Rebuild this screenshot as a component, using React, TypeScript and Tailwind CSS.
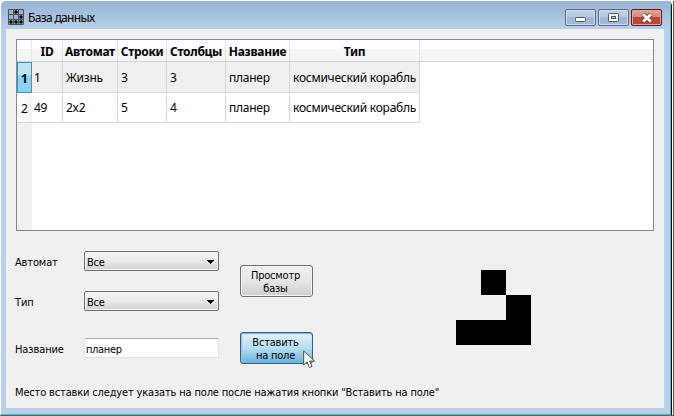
import type { ReactNode } from 'react';

const columns = [
  { title: 'ID', cls: 'w-[31px]' },
  { title: 'Автомат', cls: 'w-[55px]' },
  { title: 'Строки', cls: 'w-[49px]' },
  { title: 'Столбцы', cls: 'w-[59px]' },
  { title: 'Название', cls: 'w-[64px]' },
  { title: 'Тип', cls: 'w-[130px]' },
];

const rows = [
  ['1', 'Жизнь', '3', '3', 'планер', 'космический корабль'],
  ['49', '2x2', '5', '4', 'планер', 'космический корабль'],
];

const glider = [0, 1, 0, 0, 0, 1, 1, 1, 1];

function AppIcon() {
  return (
    <svg className="mt-2 ml-[7px] h-4 w-4 shrink-0" viewBox="0 0 16 16">
      <rect width="16" height="16" rx="1" fill="#4a525e" />
      <path d="M1 1h4v4H1zM6 1h4v4H6zM11 1h4v4h-4zM1 6h4v4H1zM6 6h4v4H6zM11 6h4v4h-4zM1 11h4v4H1zM6 11h4v4H6zM11 11h4v4h-4z" fill="#9fb3c9" />
      <g fill="#000">
        <circle cx="8" cy="3" r="1.7" />
        <circle cx="13" cy="8" r="1.7" />
        <circle cx="3" cy="13" r="1.7" />
        <circle cx="8" cy="13" r="1.7" />
        <circle cx="13" cy="13" r="1.7" />
      </g>
    </svg>
  );
}

function CaptionButton({ danger = false, children }: { danger?: boolean; children: ReactNode }) {
  return (
    <div
      className={
        'flex h-[17px] w-[31px] items-center justify-center rounded-[2px] border ' +
        (danger
          ? 'border-[#571c22] bg-linear-to-b from-[#e3a79a] from-0% via-[#d4877a] via-45% to-[#bd4630] to-50% shadow-[inset_0_0_0_1px_#e0a598]'
          : 'border-[#5a6c85] bg-linear-to-b from-[#bfd2e8] from-0% via-[#b3c8e0] via-45% to-[#a0b9d5] to-50% shadow-[inset_0_0_0_1px_#cbdbed]')
      }
    >
      {children}
    </div>
  );
}

function Combo({ value }: { value: string }) {
  return (
    <div className="flex h-5 w-[135px] items-center justify-between rounded-[2px] border border-[#707070] bg-linear-to-b from-[#f2f2f2] from-0% via-[#ebebeb] via-48% to-[#cfcfcf] pr-1 pl-[2px] shadow-[inset_0_0_0_1px_#f5f5f5]">
      <span className="pt-[2px] tracking-[-0.25px]">{value}</span>
      <svg className="mt-[2px] h-1 w-[7px]" viewBox="0 0 7 4" shapeRendering="crispEdges">
        <path d="M0 0h7L3.5 4z" fill="#000" />
      </svg>
    </div>
  );
}

export default function App() {
  return (
    <div className="flex h-[416px] w-[674px] flex-col border-b border-b-[#606060] bg-white pt-px pl-px font-['DejaVu_Sans_Condensed','DejaVu_Sans',sans-serif] text-[11px] leading-[13px] text-black [font-stretch:condensed]">
      <div className="flex min-h-0 flex-1 border-r border-[#5b615d]">
        <div className="mr-px flex flex-1 flex-col overflow-hidden rounded-t-[5px] border-r border-black">
          <div className="flex flex-1 flex-col rounded-tr-[4px] border-r border-b border-r-[#38c9e8] border-b-[#38bdd1] bg-[#bad0ea] pr-[6px] pb-[6px] pl-[5px]">
            <header className="-mr-[6px] -ml-[5px] flex h-7 shrink-0 bg-linear-to-b from-[#98b4d1] to-[#b8cfe9]">
              <AppIcon />
              <span className="mt-[9px] ml-1 font-['Noto_Sans',sans-serif] text-[12px] leading-4 tracking-[-0.65px]">База данных</span>
              <div className="mt-2 mr-2 ml-auto flex gap-[2px]">
                <CaptionButton>
                  <svg className="mt-[4px] h-[5px] w-[11px]" viewBox="0 0 11 5"><rect x=".5" y=".5" width="10" height="4" rx="1" fill="#fff" stroke="#535666" /></svg>
                </CaptionButton>
                <CaptionButton>
                  <svg className="h-[9px] w-[11px]" viewBox="0 0 11 9"><rect x=".5" y=".5" width="10" height="8" rx="1" fill="#fff" stroke="#535666" /><rect x="3.5" y="3.5" width="4" height="2" fill="#aabfd8" stroke="#535666" /></svg>
                </CaptionButton>
                <CaptionButton danger>
                  <svg className="h-[10px] w-3" viewBox="0 0 12 10"><path d="M2 1.3 10 8.7M10 1.3 2 8.7" stroke="#53505c" strokeWidth="4.6" /><path d="M2.2 1.4 9.8 8.6M9.8 1.4 2.2 8.6" stroke="#fff" strokeWidth="2.8" /></svg>
                </CaptionButton>
              </div>
            </header>

            <main className="flex flex-1 flex-col bg-[#f0f0f0] pt-[10px] pl-[10px]">
              <div className="flex h-[192px] w-[638px] shrink-0 flex-col border border-[#828790] bg-white font-['Noto_Sans',sans-serif] text-[12px] leading-4">
                <div className="flex h-[22px] shrink-0 border-b border-[#d5d5d5] bg-linear-to-b from-white from-45% to-[#f3f5f7] to-45% font-bold">
                  <div className="w-[15px] border-r border-[#e4e6e9]" />
                  {columns.map((c) => (
                    <div key={c.title} className={'flex items-center justify-center border-r border-[#dfe2e5] pt-[3px] whitespace-nowrap tracking-[-0.3px] ' + c.cls}>
                      {c.title}
                    </div>
                  ))}
                </div>
                <div className="flex flex-1">
                  <div className="flex w-[15px] flex-col bg-[#f0f0f0]">
                    <div className="flex h-[31px] items-center justify-center border border-[#4590b5] bg-linear-to-b from-[#bde4f5] from-40% to-[#8dd0f2] to-45% pt-[3px] font-bold">1</div>
                    <div className="flex h-[30px] items-center justify-center border-b border-[#d5d5d5] bg-linear-to-r from-white to-[#f3f5f7] pt-[3px]">2</div>
                  </div>
                  <div>
                    {rows.map((row, r) => (
                      <div key={r} className={'flex border-b border-[#d8d8d8] ' + (r === 0 ? 'h-[31px] bg-[#f0f0f0]' : 'h-[30px]')}>
                        {row.map((cell, i) => (
                          <div
                            key={i}
                            className={
                              'flex items-center border-r border-[#d8d8d8] whitespace-nowrap tracking-[-0.25px] ' +
                              (r === 0 ? 'pt-[2px] ' : 'pt-px ') +
                              (i === 0 ? 'pl-[2px] ' : 'pl-[3px] ') +
                              columns[i].cls
                            }
                          >
                            {cell}
                          </div>
                        ))}
                      </div>
                    ))}
                  </div>
                </div>
              </div>

              <div className="flex h-[133px] shrink-0">
                <div className="flex w-[203px] flex-col pt-5">
                  <label className="flex items-center justify-between">
                    <span className="-ml-px pt-[2px] tracking-[-0.15px]">Автомат</span>
                    <Combo value="Все" />
                  </label>
                  <label className="mt-5 flex items-center justify-between">
                    <span className="-ml-px pt-[2px] tracking-[-0.15px]">Тип</span>
                    <Combo value="Все" />
                  </label>
                  <label className="mt-[27px] flex items-center justify-between">
                    <span className="-ml-px pt-[2px] tracking-[-0.1px]">Название</span>
                    <div className="flex h-5 w-[135px] items-center rounded-[2px] border border-[#e2e3ea] border-t-[#abadb3] bg-white pt-[2px] pl-[1px] tracking-[-0.35px]">планер</div>
                  </label>
                </div>
                <div className="ml-[21px] flex w-[73px] flex-col gap-[35px] pt-[34px] text-center tracking-[-0.2px]">
                  <button className="h-8 rounded-[3px] border border-[#707070] bg-linear-to-b from-[#f2f2f2] from-0% via-[#e6e6e6] via-48% to-[#cfcfcf] pt-px pr-[2px] shadow-[inset_0_0_0_1px_#f4f4f4]">
                    Просмотр<br />базы
                  </button>
                  <button className="relative h-8 rounded-[3px] border border-[#2c628b] bg-linear-to-b from-[#e3f3fc] from-0% via-[#b7def3] via-50% to-[#68b3db] pt-px pr-[2px] shadow-[inset_0_1px_1px_#7eabc4,inset_1px_0_1px_#9fc4d8]">
                    Вставить<br />на поле
                    <svg className="absolute top-[17px] left-[62px] h-[19px] w-[13px]" viewBox="0 0 13 19">
                      <path d="M.7 1v14l3.3-3.1 2.4 5.6 2.6-1.1-2.4-5.3h5z" fill="#fff" stroke="#4a4a4a" />
                    </svg>
                  </button>
                </div>
                <div className="mt-[39px] ml-[143px] grid h-[75px] w-[75px] grid-cols-3 grid-rows-3">
                  {glider.map((on, i) => (
                    <div key={i} className={on ? 'bg-black' : ''} />
                  ))}
                </div>
              </div>
              <p className="mt-[22px] -ml-px whitespace-nowrap tracking-[-0.16px]">
                Место вставки следует указать на поле после нажатия кнопки "Вставить на поле"
              </p>
            </main>
          </div>
        </div>
      </div>
    </div>
  );
}
